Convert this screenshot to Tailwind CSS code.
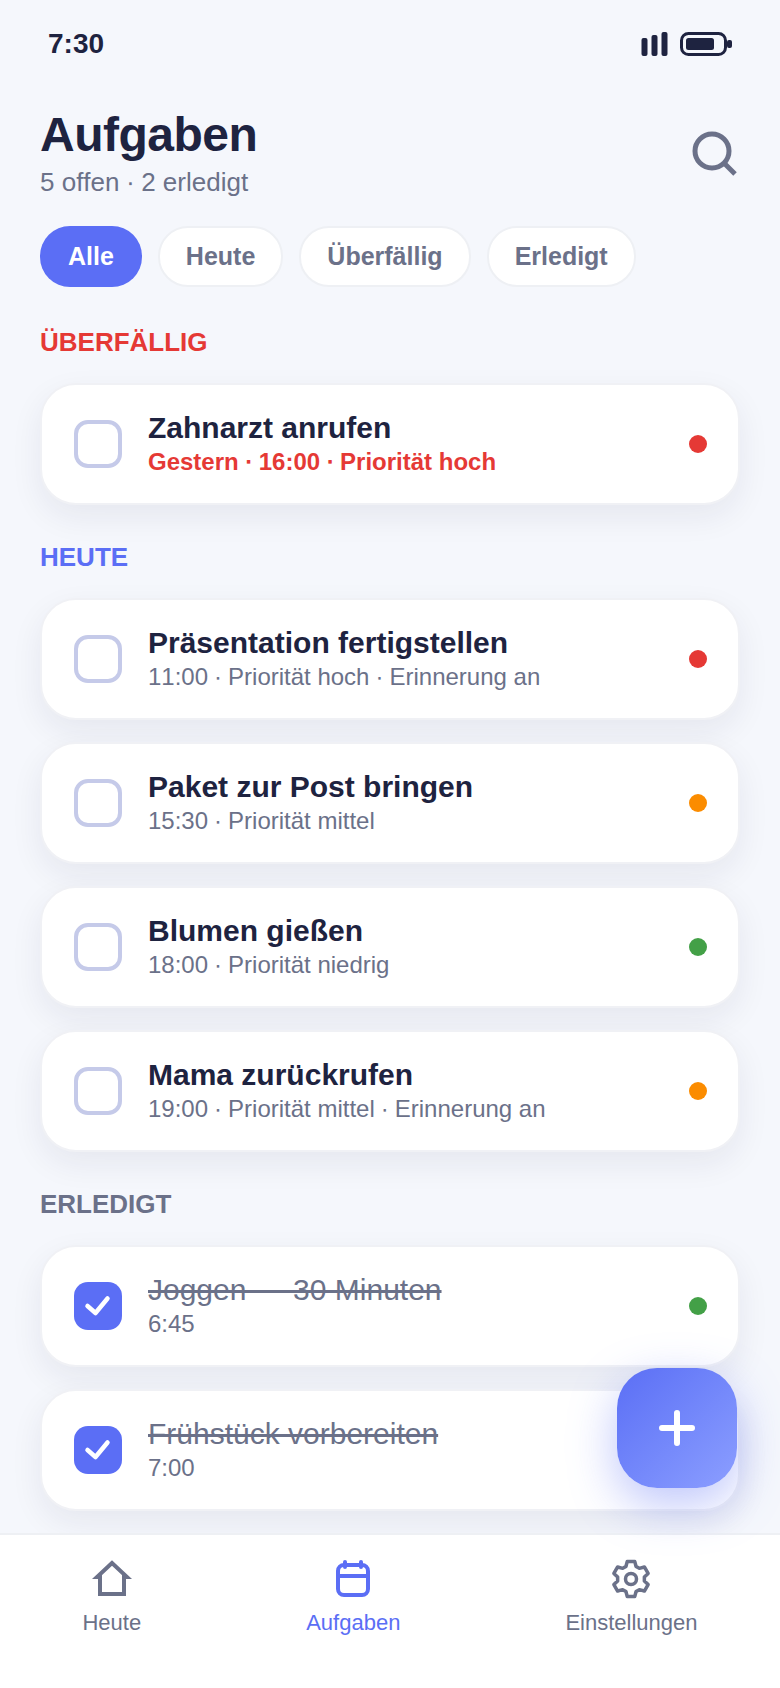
<!DOCTYPE html>
<html lang="de">
<head>
    <meta charset="UTF-8">
    <meta name="viewport" content="width=device-width, initial-scale=1.0">
    <title>Aufgaben</title>
    <script src="https://cdn.jsdelivr.net/npm/@tailwindcss/browser@4"></script>
</head>
<body class="bg-[#f5f7fc] font-['Liberation_Sans',Arial,sans-serif] [font-kerning:none] text-[#1e2340]">
<div class="relative w-[780px] h-[1688px] overflow-hidden flex flex-col">

    <!-- Statusleiste -->
    <div class="flex items-center justify-between h-[88px] pl-[48px] pr-[47px] shrink-0">
        <span class="text-[28px] leading-[32px] font-bold">7:30</span>
        <div class="flex items-center gap-[12px]">
            <svg width="27" height="24" viewBox="0 0 27 24" fill="#1e2340">
                <rect x="0.5" y="6" width="6" height="18" rx="2"/>
                <rect x="10.5" y="3" width="6" height="21" rx="2"/>
                <rect x="20.5" y="0" width="6" height="24" rx="2"/>
            </svg>
            <svg width="53" height="24" viewBox="0 0 53 24" fill="none">
                <rect x="1.5" y="1.5" width="44" height="21" rx="7" stroke="#1e2340" stroke-width="3"/>
                <rect x="6" y="6" width="28" height="12" rx="2.5" fill="#1e2340"/>
                <rect x="47" y="8" width="5" height="8" rx="2" fill="#1e2340"/>
            </svg>
        </div>
    </div>

    <!-- Kopf -->
    <header class="flex items-start justify-between pl-[40px] pr-[42px] pt-[19px] shrink-0">
        <div>
            <h1 class="text-[48px] leading-[56px] font-bold tracking-[-0.5px]">Aufgaben</h1>
            <p class="text-[26px] leading-[32px] mt-[3px] text-[#6b7189]">5 offen ∙ 2 erledigt</p>
        </div>
        <svg class="mt-[22px]" width="48" height="48" viewBox="0 0 48 48" fill="none" stroke="#6b7189" stroke-width="5">
            <circle cx="22" cy="22" r="17"/>
            <path d="M34 34 L45 45"/>
        </svg>
    </header>

    <!-- Filter -->
    <div class="flex items-center gap-[16px] pl-[40px] mt-[28px] shrink-0">
        <span class="h-[61px] px-[28px] flex items-center rounded-[30px] bg-[#5b6ef5] text-white text-[25px] font-bold">Alle</span>
        <span class="h-[61px] px-[26px] flex items-center rounded-[30px] bg-white border-2 border-[#eef0f4] text-[#6b7189] text-[25px] font-bold">Heute</span>
        <span class="h-[61px] px-[26px] flex items-center rounded-[30px] bg-white border-2 border-[#eef0f4] text-[#6b7189] text-[25px] font-bold">Überfällig</span>
        <span class="h-[61px] px-[26px] flex items-center rounded-[30px] bg-white border-2 border-[#eef0f4] text-[#6b7189] text-[25px] font-bold">Erledigt</span>
    </div>

    <!-- Liste -->
    <main class="flex-1 min-h-0 overflow-hidden px-[40px] pt-[39px]">
        <h2 class="text-[26px] leading-[32px] font-bold text-[#e53935]">ÜBERFÄLLIG</h2>
        <div class="mt-[25px] flex flex-col gap-[22px]">
            <div class="h-[122px] flex items-center pl-[32px] pr-[31px] rounded-[36px] bg-white border-2 border-[#f0f1f5] shadow-[0_12px_32px_rgba(30,35,64,0.07)]">
                <span class="w-[48px] h-[48px] rounded-[14px] border-4 border-[#c5cae9] shrink-0"></span>
                <div class="ml-[26px] flex-1 min-w-0">
                    <p class="text-[30px] leading-[34px] font-bold">Zahnarzt anrufen</p>
                    <p class="text-[24px] leading-[31px] mt-[1px] font-bold text-[#e53935]">Gestern ∙ 16:00 ∙ Priorität hoch</p>
                </div>
                <span class="w-[18px] h-[18px] rounded-full bg-[#e53935] shrink-0"></span>
            </div>
        </div>

        <h2 class="mt-[36px] text-[26px] leading-[32px] font-bold text-[#5b6ef5]">HEUTE</h2>
        <div class="mt-[25px] flex flex-col gap-[22px]">
            <div class="h-[122px] flex items-center pl-[32px] pr-[31px] rounded-[36px] bg-white border-2 border-[#f0f1f5] shadow-[0_12px_32px_rgba(30,35,64,0.07)]">
                <span class="w-[48px] h-[48px] rounded-[14px] border-4 border-[#c5cae9] shrink-0"></span>
                <div class="ml-[26px] flex-1 min-w-0">
                    <p class="text-[30px] leading-[34px] font-bold">Präsentation fertigstellen</p>
                    <p class="text-[24px] leading-[31px] mt-[1px] text-[#6b7189]">11:00 ∙ Priorität hoch ∙ Erinnerung an</p>
                </div>
                <span class="w-[18px] h-[18px] rounded-full bg-[#e53935] shrink-0"></span>
            </div>
            <div class="h-[122px] flex items-center pl-[32px] pr-[31px] rounded-[36px] bg-white border-2 border-[#f0f1f5] shadow-[0_12px_32px_rgba(30,35,64,0.07)]">
                <span class="w-[48px] h-[48px] rounded-[14px] border-4 border-[#c5cae9] shrink-0"></span>
                <div class="ml-[26px] flex-1 min-w-0">
                    <p class="text-[30px] leading-[34px] font-bold">Paket zur Post bringen</p>
                    <p class="text-[24px] leading-[31px] mt-[1px] text-[#6b7189]">15:30 ∙ Priorität mittel</p>
                </div>
                <span class="w-[18px] h-[18px] rounded-full bg-[#fb8c00] shrink-0"></span>
            </div>
            <div class="h-[122px] flex items-center pl-[32px] pr-[31px] rounded-[36px] bg-white border-2 border-[#f0f1f5] shadow-[0_12px_32px_rgba(30,35,64,0.07)]">
                <span class="w-[48px] h-[48px] rounded-[14px] border-4 border-[#c5cae9] shrink-0"></span>
                <div class="ml-[26px] flex-1 min-w-0">
                    <p class="text-[30px] leading-[34px] font-bold">Blumen gießen</p>
                    <p class="text-[24px] leading-[31px] mt-[1px] text-[#6b7189]">18:00 ∙ Priorität niedrig</p>
                </div>
                <span class="w-[18px] h-[18px] rounded-full bg-[#43a047] shrink-0"></span>
            </div>
            <div class="h-[122px] flex items-center pl-[32px] pr-[31px] rounded-[36px] bg-white border-2 border-[#f0f1f5] shadow-[0_12px_32px_rgba(30,35,64,0.07)]">
                <span class="w-[48px] h-[48px] rounded-[14px] border-4 border-[#c5cae9] shrink-0"></span>
                <div class="ml-[26px] flex-1 min-w-0">
                    <p class="text-[30px] leading-[34px] font-bold">Mama zurückrufen</p>
                    <p class="text-[24px] leading-[31px] mt-[1px] text-[#6b7189]">19:00 ∙ Priorität mittel ∙ Erinnerung an</p>
                </div>
                <span class="w-[18px] h-[18px] rounded-full bg-[#fb8c00] shrink-0"></span>
            </div>
        </div>

        <h2 class="mt-[36px] text-[26px] leading-[32px] font-bold text-[#6b7189]">ERLEDIGT</h2>
        <div class="mt-[25px] flex flex-col gap-[22px]">
            <div class="h-[122px] flex items-center pl-[32px] pr-[31px] rounded-[36px] bg-white border-2 border-[#f0f1f5] shadow-[0_12px_32px_rgba(30,35,64,0.07)]">
                <span class="w-[48px] h-[48px] rounded-[14px] bg-[#5b6ef5] shrink-0 flex items-center justify-center">
                    <svg width="48" height="48" viewBox="0 0 48 48" fill="none" stroke="#fff" stroke-width="4.5" stroke-linecap="round" stroke-linejoin="round"><path d="M13.5 24 L21.5 31 L33.5 16.5"/></svg>
                </span>
                <div class="ml-[26px] flex-1 min-w-0">
                    <p class="text-[30px] leading-[34px] text-[#6b7189] line-through decoration-[3px]">Joggen — 30 Minuten</p>
                    <p class="text-[24px] leading-[31px] mt-[1px] text-[#6b7189]">6:45</p>
                </div>
                <span class="w-[18px] h-[18px] rounded-full bg-[#43a047] shrink-0"></span>
            </div>
            <div class="h-[122px] flex items-center pl-[32px] pr-[31px] rounded-[36px] bg-white border-2 border-[#f0f1f5] shadow-[0_12px_32px_rgba(30,35,64,0.07)]">
                <span class="w-[48px] h-[48px] rounded-[14px] bg-[#5b6ef5] shrink-0 flex items-center justify-center">
                    <svg width="48" height="48" viewBox="0 0 48 48" fill="none" stroke="#fff" stroke-width="4.5" stroke-linecap="round" stroke-linejoin="round"><path d="M13.5 24 L21.5 31 L33.5 16.5"/></svg>
                </span>
                <div class="ml-[26px] flex-1 min-w-0">
                    <p class="text-[30px] leading-[34px] text-[#6b7189] line-through decoration-[3px]">Frühstück vorbereiten</p>
                    <p class="text-[24px] leading-[31px] mt-[1px] text-[#6b7189]">7:00</p>
                </div>
            </div>
        </div>
    </main>

    <!-- Navigation -->
    <nav class="h-[155px] shrink-0 bg-white border-t-2 border-[#eef0f4] flex items-start justify-around pt-[24px] relative z-10">
        <div class="flex flex-col items-center text-[#6b7189]">
            <svg width="40" height="40" viewBox="0 0 40 40" fill="none" stroke="#6b7189" stroke-width="4"><path d="M20 4 L5 18 H8 V35 H32 V18 H35 Z"/></svg>
            <span class="text-[22px] leading-[26px] mt-[11px]">Heute</span>
        </div>
        <div class="flex flex-col items-center text-[#5b6ef5]">
            <svg width="40" height="40" viewBox="0 0 40 40" fill="none" stroke="#5b6ef5" stroke-width="4" stroke-linecap="round">
                <rect x="5" y="6" width="30" height="30" rx="6"/>
                <path d="M5 17 H35 M12 3 V8 M28 3 V8"/>
            </svg>
            <span class="text-[22px] leading-[26px] mt-[11px]">Aufgaben</span>
        </div>
        <div class="flex flex-col items-center text-[#6b7189]">
            <svg width="40" height="40" viewBox="0 0 40 40" fill="none" stroke="#6b7189" stroke-width="3.5" stroke-linejoin="round">
                <path d="M14.94 7.48 L16.26 2.39 H23.74 L25.06 7.48 L28.31 9.36 L33.38 7.96 L37.12 14.44 L33.37 18.12 V21.88 L37.12 25.57 L33.37 32.05 L28.31 30.64 L25.06 32.52 L23.74 37.61 H16.26 L14.94 32.52 L11.69 30.64 L6.62 32.04 L2.88 25.56 L6.63 21.88 V18.12 L2.88 14.43 L6.63 7.95 L11.69 9.36 Z"/>
                <circle cx="20" cy="20" r="5.5"/>
            </svg>
            <span class="text-[22px] leading-[26px] mt-[11px]">Einstellungen</span>
        </div>
    </nav>

    <!-- Neue Aufgabe -->
    <button class="absolute left-[617px] top-[1368px] z-20 w-[120px] h-[120px] rounded-[40px] bg-gradient-to-br from-[#5b6ef5] to-[#8c9eff] shadow-[0_16px_48px_rgba(91,110,245,0.4)] flex items-center justify-center">
        <svg width="40" height="40" viewBox="0 0 40 40" fill="none" stroke="#fff" stroke-width="6" stroke-linecap="round"><path d="M20 5 V35 M5 20 H35"/></svg>
    </button>
</div>
</body>
</html>
